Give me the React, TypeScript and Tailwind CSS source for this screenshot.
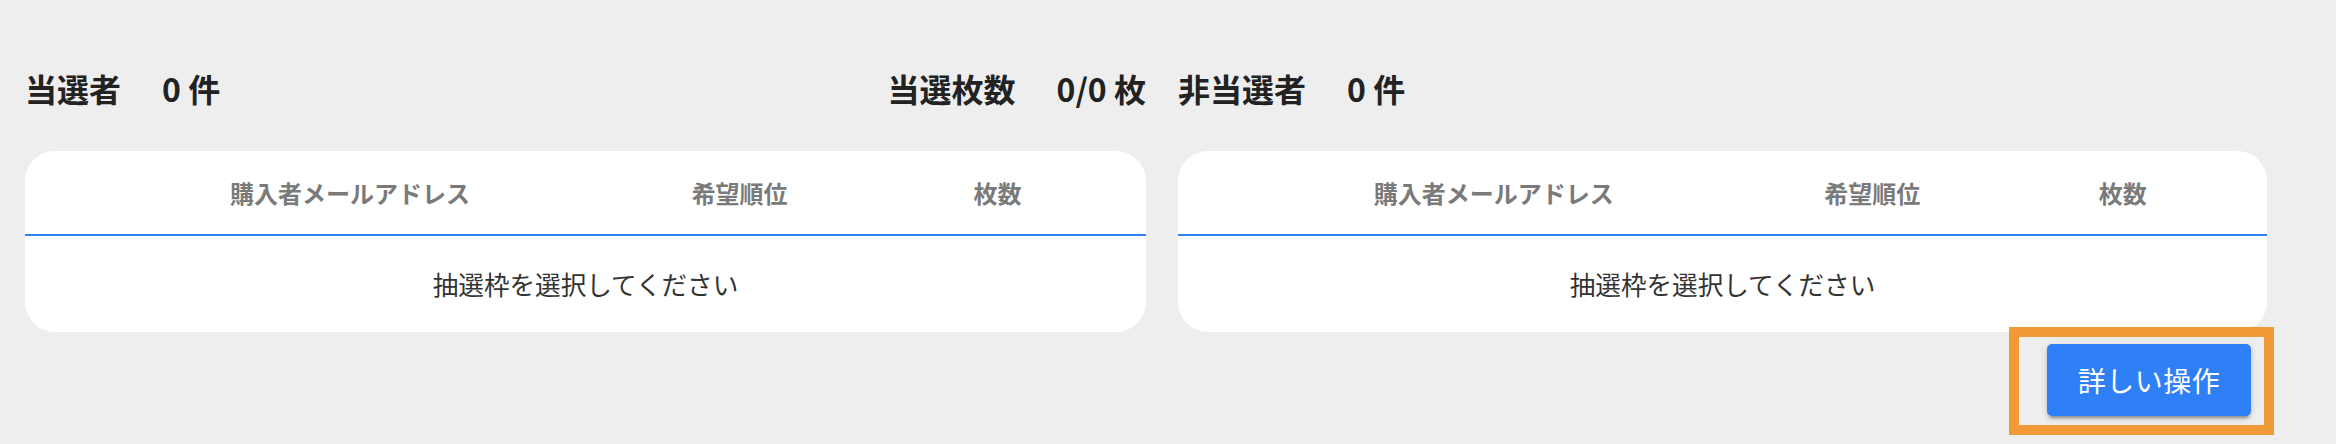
const COLS = ['購入者メールアドレス', '希望順位', '枚数']

function Summary({ label, value, unit }: { label: string; value: string; unit: string }) {
  return (
    <div className="flex items-center whitespace-nowrap">
      <span>{label}</span>
      <span className="ml-[41px]">{value} {unit}</span>
    </div>
  )
}

function ResultTable() {
  return (
    <div className="overflow-hidden rounded-[30px] bg-white">
      <div className="grid h-[85px] grid-cols-[4%_50%_19.5%_1fr] items-center border-b-2 border-[#2f7ff5] text-[24px] font-semibold text-[#7a7a7a]">
        <div />
        {COLS.map(c => (
          <div key={c} className="text-center">{c}</div>
        ))}
      </div>
      <div className="flex h-[96px] items-center justify-center text-[25.6px] text-[#333333]">
        抽選枠を選択してください
      </div>
    </div>
  )
}

export default function App() {
  return (
    <div className="min-h-[444px] bg-[#eeeeee] pl-[25px] pt-[65px] font-['Noto_Sans_CJK_JP','Noto_Sans',sans-serif]">
      <div className="flex gap-[32px]">
        <section className="w-[1121px]">
          <div className="flex h-[45px] items-center justify-between text-[32px] font-bold text-[#222222]">
            <Summary label="当選者" value="0" unit="件" />
            <Summary label="当選枚数" value="0/0" unit="枚" />
          </div>
          <div className="mt-[41px]">
            <ResultTable />
          </div>
        </section>

        <section className="w-[1089px]">
          <div className="flex h-[45px] items-center text-[32px] font-bold text-[#222222]">
            <Summary label="非当選者" value="0" unit="件" />
          </div>
          <div className="mt-[41px]">
            <ResultTable />
          </div>
          <div className="mt-[12px] flex justify-end pr-[16px]">
            <div className="relative">
              <button className="h-[72px] w-[204px] rounded-[5px] bg-[#2f7ff6] text-[28px] tracking-[0.5px] text-white shadow-[0_5px_2px_-3px_rgba(0,0,0,0.2),0_3px_3px_0_rgba(0,0,0,0.14),0_2px_8px_0_rgba(0,0,0,0.12)]">
                詳しい操作
              </button>
              {/* highlight frame */}
              <div className="pointer-events-none absolute -bottom-[19px] -left-[38px] -right-[23px] -top-[17px] border-[10px] border-[#f19a38]" />
            </div>
          </div>
        </section>
      </div>
    </div>
  )
}
